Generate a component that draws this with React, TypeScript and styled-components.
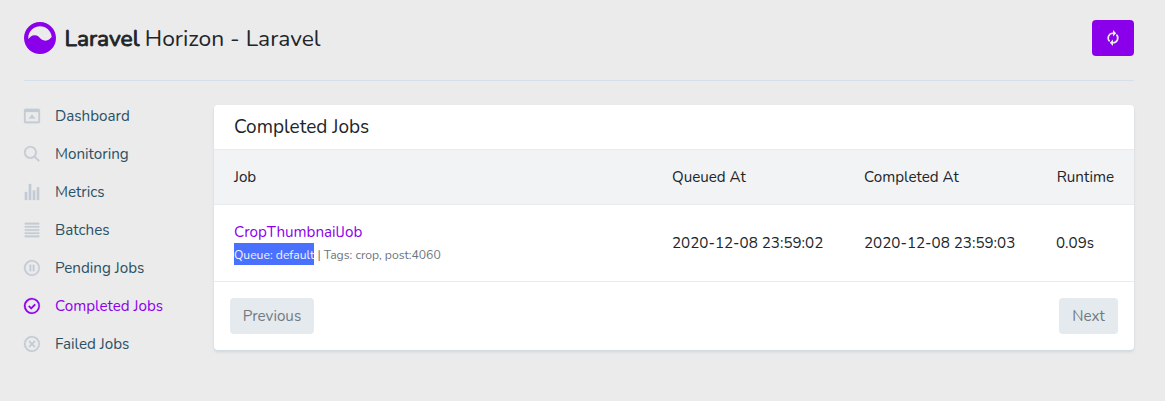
import React from 'react';
import styled, { createGlobalStyle } from 'styled-components';

const GlobalStyle = createGlobalStyle`
  * { box-sizing: border-box; }
  body {
    margin: 0;
    min-height: 401px;
    background: #ebebeb;
    color: #212529;
    font: 15.2px/22.8px Nunito, Lato, "Open Sans", sans-serif;
  }
`;

const Page = styled.div`
  width: 1110px;
  margin-left: 24px;
  padding-top: 20px;
`;

const Header = styled.header`
  display: flex;
  align-items: center;
  height: 61px;
  padding-bottom: 24px;
  border-bottom: 1px solid #d5dfe9;
`;

const Logo = styled.svg`
  width: 32px;
  height: 32px;
  fill: #8b00eb;
`;

const Title = styled.h1`
  flex: 1;
  margin: 0 0 0 8px;
  padding-top: 2px;
  font-size: 22.8px;
  font-weight: 400;
  line-height: 28px;
`;

const Brand = styled.strong`
  margin: 0 -0.5px 0 0.5px;
  font-weight: 400;
  -webkit-text-stroke: 0.9px currentColor;
`;

const RefreshButton = styled.button`
  display: flex;
  align-items: center;
  justify-content: center;
  width: 42px;
  height: 36px;
  padding: 0;
  border: 0;
  border-radius: 4px;
  background: #8b00eb;
`;

const RefreshIcon = styled.svg`
  width: 16px;
  height: 16px;
  fill: #ebebeb;
`;

const Main = styled.div`
  display: flex;
  align-items: flex-start;
  padding-top: 24px;
`;

const Sidebar = styled.nav`
  display: flex;
  flex-direction: column;
  width: 190px;
`;

const NavItem = styled.a<{ $active?: boolean }>`
  display: flex;
  align-items: center;
  gap: 15px;
  height: 38px;
  color: ${p => (p.$active ? '#8b00eb' : '#2a5164')};
  &:first-child { margin-top: -8px; }
  svg {
    width: 16px;
    height: 16px;
    overflow: visible;
    fill: ${p => (p.$active ? '#8b00eb' : '#c3cbd6')};
    stroke: ${p => (p.$active ? '#8b00eb' : '#c3cbd6')};
    stroke-width: 0.3;
  }
`;

const Card = styled.section`
  flex: 1;
  height: 245px;
  border-radius: 4px;
  background: #fff;
  box-shadow: 0 2px 3px #cdd8df;
  overflow: hidden;
`;

const CardHeader = styled.h2`
  height: 45px;
  margin: 0;
  padding: 11px 20px 0;
  border-bottom: 1px solid #e8eaec;
  font-size: 19px;
  font-weight: 400;
  line-height: 23px;
`;

const Row = styled.div<{ $head?: boolean }>`
  display: grid;
  grid-template-columns: 438px 192px 192px 1fr;
  align-items: center;
  height: ${p => (p.$head ? 55 : 77)}px;
  padding-left: 20px;
  border-bottom: 1px solid #e9ecef;
  background: ${p => (p.$head ? '#f2f3f5' : '#fff')};
`;

const RuntimeHeading = styled.span`
  padding-right: 20px;
  text-align: right;
`;

const JobCell = styled.div`
  padding-bottom: 2px;
`;

const JobName = styled.a`
  display: block;
  height: 23px;
  line-height: 25px;
  color: #8b00eb;
`;

const JobMeta = styled.small`
  display: flex;
  height: 22px;
  font-size: 12.16px;
  line-height: 25px;
  color: #6c757d;
`;

const Selected = styled.span`
  width: 80px;
  margin-right: 3.4px;
  background: #4a70ff;
  color: #f2f5ff;
  white-space: nowrap;
`;

const Pagination = styled.div`
  display: flex;
  justify-content: space-between;
  padding: 16px;
`;

const PageButton = styled.button<{ $width: number }>`
  width: ${p => p.$width}px;
  height: 36px;
  padding: 0;
  border: 0;
  border-radius: 4px;
  background: #e5eaee;
  color: #727a81;
  font: inherit;
`;

const RING = 'M2.93 17.07A10 10 0 1 1 17.07 2.93 10 10 0 0 1 2.93 17.07zm12.73-1.41A8 8 0 1 0 4.34 4.34a8 8 0 0 0 11.32 11.32z';

const navItems = [
  { label: 'Dashboard', icon: 'M0 3c0-1.1.9-2 2-2h16a2 2 0 0 1 2 2v14a2 2 0 0 1-2 2H2a2 2 0 0 1-2-2V3zm2 2v12h16V5H2zm8 3l4 5H6l4-5z' },
  { label: 'Monitoring', icon: 'M12.9 14.32a8 8 0 1 1 1.41-1.41l5.35 5.33-1.42 1.42-5.33-5.34zM8 14A6 6 0 1 0 8 2a6 6 0 0 0 0 12z' },
  { label: 'Metrics', icon: 'M1 10h3v10H1V10zM6 0h3v20H6V0zm5 8h3v12h-3V8zm5-4h3v16h-3V4z' },
  { label: 'Batches', icon: 'M1 1h18v2H1V1zm0 8h18v2H1V9zm0 8h18v2H1v-2zM1 5h18v2H1V5zm0 8h18v2H1v-2z' },
  { label: 'Pending Jobs', icon: RING + 'M7 6h2v8H7V6zm4 0h2v8h-2V6z' },
  { label: 'Completed Jobs', active: true, icon: RING + 'M6.7 9.29L9 11.6l4.3-4.3 1.4 1.42L9 14.4l-3.7-3.7 1.4-1.42z' },
  { label: 'Failed Jobs', icon: RING + 'M11.41 10l2.83-2.83-1.41-1.41L10 8.59 7.17 5.76 5.76 7.17 8.59 10l-2.83 2.83 1.41 1.41L10 11.41l2.83 2.83 1.41-1.41L11.41 10z' },
];

export default function App() {
  return (
    <>
      <GlobalStyle />
      <Page>
        <Header>
          <Logo viewBox="0 0 30 30">
            <path d="M5.26 26.41C2.04 23.66 0 19.57 0 15c0-4.14 1.68-7.89 4.39-10.61C7.11 1.68 10.86 0 15 0c8.28 0 15 6.72 15 15 0 8.28-6.72 15-15 15-3.72 0-7.12-1.35-9.74-3.59zM4.04 15.92C5.7 14.46 6.87 12.5 10 12.5c5 0 5 5 10 5 3.13 0 4.3-1.96 5.96-3.42C25.49 8.43 20.76 4 15 4 8.92 4 4 8.92 4 15c0 .31.01.62.04.92z" />
          </Logo>
          <Title><Brand>Laravel</Brand> Horizon - Laravel</Title>
          <RefreshButton aria-label="Refresh">
            <RefreshIcon viewBox="0 0 20 20">
              <path d="M10 3v2a5 5 0 0 0-3.54 8.54l-1.41 1.41A7 7 0 0 1 10 3zm4.95 2.05A7 7 0 0 1 10 17v-2a5 5 0 0 0 3.54-8.54l1.41-1.41zM10 20l-4-4 4-4v8zm0-12V0l4 4-4 4z" />
            </RefreshIcon>
          </RefreshButton>
        </Header>
        <Main>
          <Sidebar>
            {navItems.map(item => (
              <NavItem key={item.label} $active={item.active}>
                <svg viewBox="0 0 20 20"><path fillRule="evenodd" d={item.icon} /></svg>
                <span>{item.label}</span>
              </NavItem>
            ))}
          </Sidebar>
          <Card>
            <CardHeader>Completed Jobs</CardHeader>
            <Row $head>
              <span>Job</span>
              <span>Queued At</span>
              <span>Completed At</span>
              <RuntimeHeading>Runtime</RuntimeHeading>
            </Row>
            <Row>
              <JobCell>
                <JobName>CropThumbnailJob</JobName>
                <JobMeta>
                  <Selected>Queue: default</Selected>
                  <span>| Tags: crop, post:4060</span>
                </JobMeta>
              </JobCell>
              <span>2020-12-08 23:59:02</span>
              <span>2020-12-08 23:59:03</span>
              <span>0.09s</span>
            </Row>
            <Pagination>
              <PageButton $width={84}>Previous</PageButton>
              <PageButton $width={59}>Next</PageButton>
            </Pagination>
          </Card>
        </Main>
      </Page>
    </>
  );
}
